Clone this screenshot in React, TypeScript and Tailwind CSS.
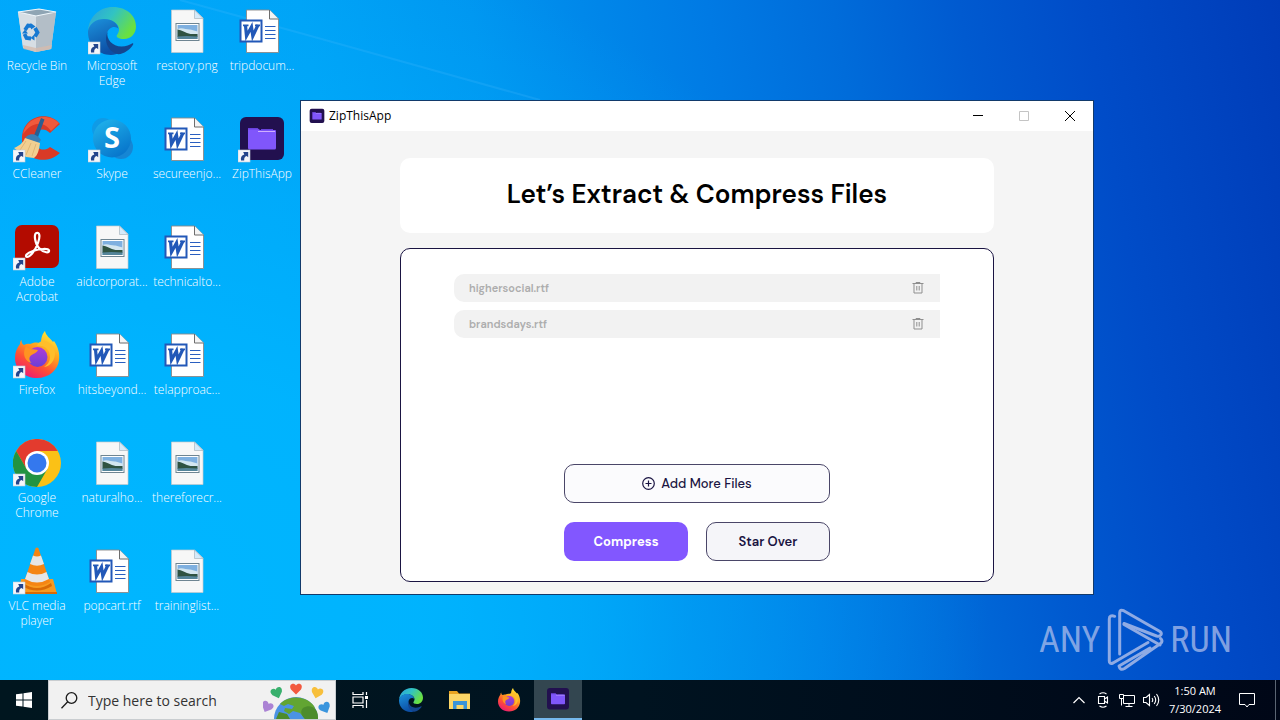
import { useId, useState, type ReactNode } from "react";

const Shortcut = () => (
  <g>
    <rect x="0" y="35" width="12" height="12" fill="#f4f6fa" stroke="#c3cbd8" strokeWidth=".6" />
    <path d="M3 45.500c-.6-3.400.8-5.400 3.300-6.100L5.200 37h5v5.300L8.700 41c-2 .6-2.700 2-2.500 4.500z" fill="#24458c" />
  </g>
);

const Svg48 = ({ children, size = "size-12" }: { children: ReactNode; size?: string }) => (
  <svg viewBox="0 0 48 48" className={size} aria-hidden="true">
    {children}
  </svg>
);

const RecycleBin = () => (
  <Svg48>
    <path d="M5 5l21-3 17 3-5 37-15 3-13-5z" fill="#c9d3da" />
    <path d="M5 5l18 4v36l-13-4z" fill="#d6dee4" />
    <path d="M43 5L23 9v36l15-3z" fill="#b3bec7" />
    <path d="M10 38l13 3 16-3-.6 4L23 45l-12.500-3z" fill="#d4bcae" opacity=".8" />
    <path d="M5 5l21-3 17 3-20 4z" fill="#8fa5b4" stroke="#eef6fb" strokeWidth="1.200" />
    <g fill="none" stroke="#1679d2" strokeWidth="3.800">
      <path d="M12 23l3-4.500 4 .5M22 21l2.500 4.500-2.500 4M18 31.500l-4.500-.5-2-4" />
    </g>
    <path d="M17.500 16l5 3.500-4.500 3zM21.500 33.500l-4-2.500 4-3.500zM9 26.500l3-4 3 4z" fill="#1679d2" />
  </Svg48>
);

const EdgeShape = () => {
  const id = useId();
  return (
    <g>
      <defs>
        <linearGradient id={`${id}a`} x1="0" y1="0" x2="1" y2=".5">
          <stop offset="0" stopColor="#2a9fe0" />
          <stop offset=".5" stopColor="#31c3c3" />
          <stop offset="1" stopColor="#6ae040" />
        </linearGradient>
        <linearGradient id={`${id}b`} x1="0" y1="0" x2=".4" y2="1">
          <stop offset="0" stopColor="#1c93dd" />
          <stop offset="1" stopColor="#0c4fa5" />
        </linearGradient>
      </defs>
      <path d="M0 24C1 10 11 0 25 0c14 0 23 9 23 19.500 0 7-5 12.500-12 12.500-5 0-8.500-1.700-7-4 1.500-2 2-4 2-5.500 0-5.500-6-10-14-10C8 12.500 2 17 0 24z" fill={`url(#${id}a)`} />
      <path d="M0 24c1.500-7.500 8-12 16-12 8.500 0 14 4.600 14.500 10C28 18.500 20 19.500 19 27c-1 9 5 16 13 18-3 2-5.500 3-9 3C9 47.500-.5 37 0 24z" fill={`url(#${id}b)`} />
      <path d="M19.500 25c-1.500 7 5 14.500 14 14.500 5 0 8-1.500 10.500-3 1-.5 1.700.3 1 1.300C41.500 43 36 47 30.500 47.300 20 45 15.500 34 19.500 25z" fill="#14468f" />
    </g>
  );
};

const ImageFile = () => (
  <Svg48>
    <path d="M8.500 3h23l8.500 8v34.500h-31.500z" fill="#f7f7f7" stroke="#c5c9cc" strokeWidth=".7" />
    <path d="M31.500 3v8.500H40z" fill="#d5eafa" stroke="#a9b6bf" strokeWidth=".7" />
    <rect x="13" y="16.500" width="23" height="17" fill="#fff" stroke="#6f8592" />
    <path d="M14.500 18h20v14h-20z" fill="#7fb0e0" />
    <path d="M14.500 22c5-2 9 1 13 .5l7 2V28h-20z" fill="#d3e6f0" />
    <path d="M14.500 22.500c4 .5 8 3.500 13 4.500h7v3h-20z" fill="#2f5342" />
    <path d="M14.500 29.500l9-.5 11 .500v2.500h-20z" fill="#55859a" />
  </Svg48>
);

const WordFile = () => (
  <Svg48>
    <path d="M8.500 3h23l9 9v33.500h-32z" fill="#fff" stroke="#8a8a8a" strokeWidth=".9" />
    <path d="M31.500 3v9h9" fill="#f4f4f4" stroke="#6d6d6d" />
    <path d="M27 19.500h10.500M27 23.500h10.500M27 27.500h10.500M27 31.500h10.500" stroke="#2a5fc0" strokeWidth="1.200" />
    <rect x="2.500" y="13.500" width="21" height="21" fill="#fff" stroke="#2258b8" strokeWidth="2" />
    <path d="M7.500 18.500l1 10.500 5-9 1.300 9 5.200-11" fill="none" stroke="#2258b8" strokeWidth="3.200" />
    <path d="M5 18.300h5.500M17 18.300h5" stroke="#2258b8" strokeWidth="1.800" />
  </Svg48>
);

const CCleaner = () => (
  <Svg48>
    <path d="M47 9C36-5 9 0 9 24c0 21 24 27 38 14l-10-6c-7 6-16 1-16-8s9-13 16-6z" fill="#d93a27" />
    <path d="M46 8C36-3 13 1 10 19c9-12 20-14 28-3z" fill="#ef5a3c" />
    <path d="M28 3l3.500 1.500L25 22l-4-1.500z" fill="#285f92" />
    <path d="M14 21c5-4 11-1 14 4l-3 3-13-5z" fill="#3a7fb4" />
    <path d="M12 23l15 5c-1 7-2 12-6 15l-8-1L1 33c5-2 9-5 11-10z" fill="#f2cf91" />
    <path d="M13 26l-6 9M18 28l-5 12M23 29l-4 12" stroke="#e0b776" />
    <Shortcut />
  </Svg48>
);

const Skype = () => {
  const id = useId();
  return (
    <Svg48>
      <defs>
        <linearGradient id={id} x1="0" y1="0" x2=".6" y2="1">
          <stop offset="0" stopColor="#21b7ee" />
          <stop offset="1" stopColor="#0877cc" />
        </linearGradient>
      </defs>
      <circle cx="15" cy="14" r="11" fill="#0f9be6" />
      <circle cx="33" cy="32" r="12" fill="#1686d4" />
      <circle cx="24" cy="23.500" r="19" fill={`url(#${id})`} />
      <text x="24" y="33" textAnchor="middle" fill="#fff" className="font-['Open_Sans',sans-serif] text-[29px] font-bold">S</text>
      <Shortcut />
    </Svg48>
  );
};

const ZipShape = () => (
  <g>
    <rect x="2" y="2" width="44" height="43" rx="6" fill="#22104f" />
    <path d="M10 13h9l3 2h15q1 0 1 1v17q0 1.500-1.500 1.500h-25Q10 34.500 10 33z" fill="#8056fb" />
    <path d="M10 13h9l2 1.500H10zM23 14h12v1.200h-12z" fill="#6a42de" />
    <path d="M20 16.500h17" stroke="#f0d7ff" strokeWidth=".7" />
  </g>
);

const Acrobat = () => (
  <Svg48>
    <rect x="2" y="2" width="44" height="43" rx="7" fill="#b30b00" />
    <path
      d="M23.500 10c3-1 4 3 1.500 10-3 8-8 14-11 14-2.500-.5-.5-4 6-6 7-2.200 15-3 16-.5.800 2.800-5 2.700-10-2.500-4-4-5.500-14-2.500-15z"
      fill="none"
      stroke="#fff"
      strokeWidth="2.200"
    />
    <Shortcut />
  </Svg48>
);

const FirefoxShape = () => {
  const id = useId();
  return (
    <g>
      <defs>
        <linearGradient id={`${id}a`} x1=".85" y1="0" x2=".3" y2="1">
          <stop offset="0" stopColor="#fff23c" />
          <stop offset=".4" stopColor="#ffa51e" />
          <stop offset=".7" stopColor="#ff5034" />
          <stop offset="1" stopColor="#ec1b72" />
        </linearGradient>
        <linearGradient id={`${id}b`} x1="0" y1="0" x2="0" y2="1">
          <stop offset="0" stopColor="#b03bd6" />
          <stop offset="1" stopColor="#6b3fd4" />
        </linearGradient>
      </defs>
      <path d="M28 12c0-6 2-10 4-12 1 5 5 7 8 11l1-1c4 6 6 12 5 19-1 10-10 18-22 18S2 39 2 27c0-6 2-10 5-14 0-2 .4-3 1.500-4 0 3 1 4 2.500 5 2-1 4-1.500 6-1 3-1.500 6-2 11-1z" fill={`url(#${id}a)`} />
      <circle cx="24.500" cy="26" r="10" fill={`url(#${id}b)`} />
      <path d="M13 15c3 4 8 3 12 4-1 3-6 4-7.500 6-2 2-1 5 1 7-6-1-10-9-5.500-17z" fill="#ff9321" />
      <path d="M24 15c8-1 13 4 13 11 0 5-3 8-6 10 7-1 11-7 11-14 0-6-4-10-9-12-4-1-8 1-9 5z" fill="#ffbe2a" />
    </g>
  );
};

const Chrome = () => (
  <Svg48>
    <circle cx="24" cy="24" r="24" fill="#fbc116" />
    <path d="M3.200 12A24 24 0 0 1 44.800 12H24L13.600 30z" fill="#e33b2e" />
    <path d="M3.200 12A24 24 0 0 0 24 48L34.400 30H24L13.600 30z" fill="#229342" />
    <circle cx="24" cy="24" r="12" fill="#fff" />
    <circle cx="24" cy="24" r="9.500" fill="#3478ee" />
    <Shortcut />
  </Svg48>
);

const Vlc = () => (
  <Svg48>
    <path d="M8 32h32l4 15H6z" fill="#f79a20" />
    <path d="M6 45h38v2H6z" fill="#d96a05" />
    <path d="M10 36q14 10 28 0l1 3q-15 9-30 0z" fill="#d96a05" />
    <path d="M22.500 1.500q1.500-2 3 0L37 35q-13 8-26 0z" fill="#f58513" />
    <path d="M20 8.500q4 2 8 0l3 8.500q-7 3.500-14 0zM14.500 25q9.500 5 19 0l2.500 7q-12 7-24 0z" fill="#e6e6e6" />
    <Shortcut />
  </Svg48>
);

const EdgeDesk = () => (
  <Svg48>
    <EdgeShape />
    <Shortcut />
  </Svg48>
);
const FirefoxDesk = () => (
  <Svg48>
    <FirefoxShape />
    <Shortcut />
  </Svg48>
);
const ZipDesk = () => (
  <Svg48>
    <ZipShape />
    <Shortcut />
  </Svg48>
);

type Item = { name: string; Icon: () => ReactNode };

const columns: Item[][] = [
  [
    { name: "Recycle Bin", Icon: RecycleBin },
    { name: "CCleaner", Icon: CCleaner },
    { name: "Adobe Acrobat", Icon: Acrobat },
    { name: "Firefox", Icon: FirefoxDesk },
    { name: "Google Chrome", Icon: Chrome },
    { name: "VLC media player", Icon: Vlc },
  ],
  [
    { name: "Microsoft Edge", Icon: EdgeDesk },
    { name: "Skype", Icon: Skype },
    { name: "aidcorporat...", Icon: ImageFile },
    { name: "hitsbeyond...", Icon: WordFile },
    { name: "naturalho...", Icon: ImageFile },
    { name: "popcart.rtf", Icon: WordFile },
  ],
  [
    { name: "restory.png", Icon: ImageFile },
    { name: "secureenjo...", Icon: WordFile },
    { name: "technicalto...", Icon: WordFile },
    { name: "telapproac...", Icon: WordFile },
    { name: "thereforecr...", Icon: ImageFile },
    { name: "traininglist...", Icon: ImageFile },
  ],
  [
    { name: "tripdocum...", Icon: WordFile },
    { name: "ZipThisApp", Icon: ZipDesk },
  ],
];

const Trash = () => (
  <svg viewBox="0 0 12 12" className="size-3" fill="none" stroke="#8f8f8f" aria-hidden="true">
    <path d="M.5 1.500h11M4 1.500V.5h4v1M2 1.500v9.500h8V1.500M4.800 4v4.500M7.200 4v4.500" />
  </svg>
);

function AppWindow() {
  const [files, setFiles] = useState(["highersocial.rtf", "brandsdays.rtf"]);
  return (
    <section aria-label="ZipThisApp" className="absolute top-[100px] left-[300px] flex w-[794px] flex-col border border-[#123a6b] bg-[#f5f5f5]">
      <header className="flex h-[30px] items-center bg-white pl-2">
        <Svg48 size="size-4">
          <ZipShape />
        </Svg48>
        <span className="ml-1 grow font-['Open_Sans',sans-serif] text-xs text-black">ZipThisApp</span>
        <button aria-label="Minimize" className="flex h-full w-[46px] items-center justify-center">
          <svg viewBox="0 0 10 10" className="size-2.5" stroke="#000"><path d="M0 4.500h10" /></svg>
        </button>
        <button aria-label="Maximize" disabled className="flex h-full w-[46px] items-center justify-center">
          <svg viewBox="0 0 10 10" className="size-2.5" fill="none" stroke="#c4c4c4"><path d="M.5.500h9v9h-9z" /></svg>
        </button>
        <button aria-label="Close" className="flex h-full w-[46px] items-center justify-center">
          <svg viewBox="0 0 10 10" className="size-2.5" stroke="#000"><path d="M0 0l10 10M10 0L0 10" /></svg>
        </button>
      </header>
      <main className="flex flex-col gap-[15px] px-[99px] pt-[27px] pb-3 font-['DM_Sans','Open_Sans',sans-serif]">
        <div className="flex h-[75px] items-center justify-center rounded-[10px] bg-white pb-[3px]">
          <h1 className="text-[26px] font-semibold whitespace-nowrap text-black">Let’s Extract &amp; Compress Files</h1>
        </div>
        <div className="flex flex-col rounded-[10px] border border-[#1a1442] bg-white px-[53px] pt-[25px] pb-5">
          <ul className="flex min-h-[190px] flex-col gap-2">
            {files.map((f) => (
              <li key={f} className="flex h-7 items-center justify-between rounded-l-[10px] bg-[#f2f2f2] pr-4 pl-[15px] text-[11px] font-semibold text-[#adadad]">
                <span>{f}</span>
                <button aria-label={`Remove ${f}`} onClick={() => setFiles(files.filter((x) => x !== f))}>
                  <Trash />
                </button>
              </li>
            ))}
          </ul>
          <div className="mx-auto grid w-[266px] grid-cols-2 gap-x-[18px] gap-y-[19px] text-[13px] text-[#1a1442]">
            <button className="col-span-2 flex h-[39px] items-center justify-center gap-1.5 rounded-[10px] border border-[#4a4668] bg-[#fbfbfd] font-medium">
              <svg viewBox="0 0 13 13" className="size-[13px]" fill="none" stroke="currentColor" strokeWidth="1.200" aria-hidden="true">
                <circle cx="6.500" cy="6.500" r="5.800" />
                <path d="M6.500 3.500v6M3.500 6.500h6" />
              </svg>
              Add More Files
            </button>
            <button className="h-[39px] rounded-[10px] bg-[#8257ff] font-bold text-white">Compress</button>
            <button className="h-[39px] rounded-[10px] border border-[#4a4668] bg-[#f5f5f9] font-semibold">Star Over</button>
          </div>
        </div>
      </main>
    </section>
  );
}

const Watermark = () => (
  <div className="absolute right-[48px] bottom-[7px] flex items-center gap-1.5 font-['Roboto_Condensed','Liberation_Sans_Narrow',sans-serif] text-[36px] leading-none text-[#b9c6ee]/70">
    <span>ANY</span>
    <svg viewBox="0 0 58 66" className="h-[66px] w-[58px]" fill="none" aria-hidden="true">
      <g stroke="#8fabe4" strokeWidth="3" strokeLinejoin="round" strokeLinecap="round">
        <path d="M8.700 9.300Q3.300 7.500 3.300 12v42q0 3.500 3.700 2L42 35.500" />
        <path d="M13.700 47V6q0-4 4-2.300L54 24.500q3 2.500-.5 4.500-1.500.7-3 0L18 16.500" />
        <path d="M18 17.500l36 20.500M54.500 31.500q3 2.500 0 5L18.500 61.500q-4.500 2.500-5.500-2.500L44 41" />
      </g>
    </svg>
    <span>RUN</span>
  </div>
);

const Heart = ({ x, y, r, fill }: { x: number; y: number; r: number; fill: string }) => (
  <path transform={`translate(${x} ${y}) rotate(${r})`} d="M0 5.500L-5 0.500C-8-5-2-7 0-3.500 2-7 8-5 5 .5z" fill={fill} />
);

const Globe = () => (
  <svg viewBox="0 0 72 38" className="h-[38px] w-[72px] shrink-0" aria-hidden="true">
    <circle cx="33" cy="38" r="22" fill="#4b93e4" />
    <path d="M17 23c8-9 26-9 34 2l3 7v6H42l-5-6-7-2-4 3-5-3 1-3 7 1 2-3-6-2-4 2z" fill="#62a532" />
    <path d="M40 27c5-3 10-2 13 2 2 3 2 6 2 9H42c-4-4-5-8-2-11zM16 31l8 2 3 5H13z" fill="#4d8c2b" />
    <Heart x={4} y={26} r={25} fill="#ab83d4" />
    <Heart x={14} y={12} r={-20} fill="#39b06d" />
    <Heart x={33} y={8} r={0} fill="#f2593f" />
    <Heart x={54} y={12} r={15} fill="#f7bf3b" />
    <Heart x={62} y={27} r={-25} fill="#3a95dd" />
  </svg>
);

const taskClass = "flex h-10 w-12 items-center justify-center";

function Taskbar() {
  return (
    <footer className="flex h-10 items-center bg-linear-to-r from-[#00161f] via-[#001320] to-[#000717] font-['Open_Sans',sans-serif] text-white">
      <button aria-label="Start" className={taskClass}>
        <svg viewBox="0 0 16 16" className="size-4" fill="#fff"><path d="M0 2.300L6.500 1.400v6.100H0zM7.500 1.200L16 0v7.500H7.500zM0 8.500h6.500v6.100L0 13.700zM7.500 8.500H16V16l-8.500-1.200z" /></svg>
      </button>
      <label className="flex h-10 w-[288px] items-center border border-[#c9cdd0] bg-[#f1f1f1] pl-3 text-[#1a1a1a]">
        <svg viewBox="0 0 17 17" className="size-[17px] shrink-0" fill="none" stroke="#1a1a1a" strokeWidth="1.300" aria-hidden="true">
          <circle cx="10.500" cy="6" r="5.300" />
          <path d="M6.700 9.800L.5 16.300" />
        </svg>
        <input aria-label="Search" placeholder="Type here to search" className="ml-2.5 w-0 grow pt-0.5 text-sm outline-none placeholder:text-[#333]" />
        <Globe />
      </label>
      <div className="flex gap-px">
        <button aria-label="Task View" className={taskClass}>
          <svg viewBox="0 0 17 16" className="h-4 w-[17px]" fill="none" stroke="#fff" strokeWidth="1.200">
            <path d="M1 0v2.500h10V0M1 16v-2.500h10V16M1 5h10v6H1zM14.500 0v3M14.500 8v8" />
            <path d="M13 4h3v3h-3z" fill="#fff" stroke="none" />
          </svg>
        </button>
        <button aria-label="Microsoft Edge" className={`${taskClass} ml-0.5`}><Svg48 size="size-6"><EdgeShape /></Svg48></button>
        <button aria-label="File Explorer" className={taskClass}>
          <svg viewBox="0 0 24 24" className="size-6">
            <path d="M1 3h8l2 2.500h11V21H1z" fill="#e9a421" />
            <path d="M1 6h21v15H1z" fill="#fcd667" />
            <path d="M5 13h14v8h-3.500v-4h-7v4H5z" fill="#3b94d9" />
          </svg>
        </button>
        <button aria-label="Firefox" className={taskClass}><Svg48 size="size-6"><FirefoxShape /></Svg48></button>
        <button aria-label="ZipThisApp" className="flex h-10 w-12 items-center justify-center border-b-2 border-[#76b9ed] bg-[#334650]">
          <Svg48 size="size-6"><ZipShape /></Svg48>
        </button>
      </div>
      <div className="ml-auto flex h-full items-center">
        <button aria-label="Show hidden icons" className="flex w-6 justify-center">
          <svg viewBox="0 0 12 8" className="h-2 w-3" fill="none" stroke="#fff" strokeWidth="1.200"><path d="M.5 7L6 1.500 11.500 7" /></svg>
        </button>
        <button aria-label="Meet Now" className="flex w-6 justify-center">
          <svg viewBox="0 0 12 16" className="h-4 w-3" fill="none" stroke="#fff" strokeWidth="1.100"><path d="M1.500 4.500h6v7h-6zM7.500 7l3-2v6l-3-2M2.500 2Q6-.5 9.500 2M2.500 14Q6 16.500 9.500 14" /></svg>
        </button>
        <button aria-label="Network" className="flex w-6 justify-center">
          <svg viewBox="0 0 16 14" className="h-3.5 w-4" fill="none" stroke="#fff"><path d="M4.500 2.500h11v8H4.500zM10 10.500v3M6.500 13.500h7" /><path d="M.5 1.500h4v4h-4zM2.500 5.500v7" fill="#000b19" /></svg>
        </button>
        <button aria-label="Volume" className="flex w-6 justify-center">
          <svg viewBox="0 0 17 14" className="h-3.5 w-[17px]" fill="none" stroke="#fff" strokeWidth="1.100"><path d="M.5 4.500H3l3.500-3v11L3 9.500H.5zM9 5q1.500 2 0 4M11.200 3q3 4 0 8M13.500 1q4.500 6 0 12" /></svg>
        </button>
        <time className="flex w-16 flex-col text-center text-[11px] leading-[18px]">
          <span>1:50 AM</span>
          <span>7/30/2024</span>
        </time>
        <button aria-label="Notifications" className="flex w-10 justify-center">
          <svg viewBox="0 0 16 16" className="size-4" fill="none" stroke="#fff"><path d="M.5 1.500h15v11H10L8 15l-2-2.500H.5z" /></svg>
        </button>
        <span className="ml-2 h-full w-[5px] border-l border-[#5b6572]" />
      </div>
    </footer>
  );
}

const LightBeam = () => (
  <svg viewBox="0 0 600 120" className="absolute top-0 left-0 h-[120px] w-[600px]" fill="none" aria-hidden="true">
    <path d="M180 0L300 33 540 100" stroke="#4fc0ff" strokeWidth="2" opacity=".2" />
  </svg>
);

export default function App() {
  return (
    <div className="flex min-h-screen flex-col">
      <div className="relative min-h-[680px] grow overflow-hidden bg-[radial-gradient(ellipse_860px_700px_at_10%_90%,#00b6ff_0%,#00b6ffd9_35%,#00b4ff66_65%,#00b0ff00_100%),linear-gradient(80deg,#00a8fc_0%,#00a2f6_30%,#0096f0_42%,#0088ea_50%,#007ae4_59%,#006cda_68%,#005ad0_77%,#004cc8_86%,#003cb8_100%)]">
        <LightBeam />
        <nav aria-label="Desktop" className="relative flex font-['Open_Sans',sans-serif] text-xs leading-[15px] font-light text-white">
          {columns.map((col, i) => (
            <ul key={i} className="w-[75px] pr-px">
              {col.map(({ name, Icon }) => (
                <li key={name} className="h-[108px] pt-[7px]">
                  <a href="#" className="flex flex-col items-center gap-[3px] text-center">
                    <Icon />
                    <span>{name}</span>
                  </a>
                </li>
              ))}
            </ul>
          ))}
        </nav>
        <AppWindow />
        <Watermark />
      </div>
      <Taskbar />
    </div>
  );
}
